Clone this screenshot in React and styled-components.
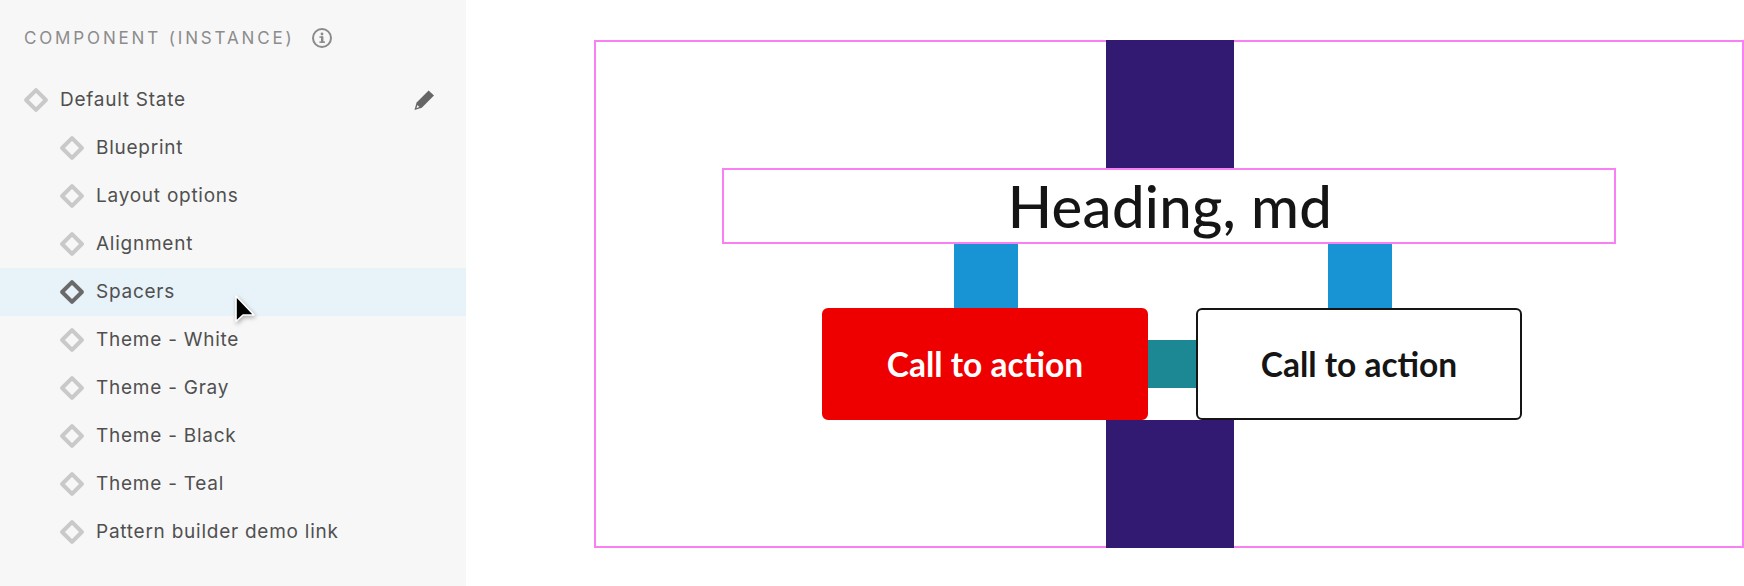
import React from 'react';
import styled, { createGlobalStyle } from 'styled-components';

const GlobalStyle = createGlobalStyle`
  html, body {
    margin: 0;
    padding: 0;
    background: #fff;
  }
  *, *::before, *::after {
    box-sizing: border-box;
  }
`;

const Page = styled.div`
  position: relative;
  display: flex;
  width: 1744px;
  height: 586px;
  overflow: hidden;
`;

const Sidebar = styled.aside`
  width: 466px;
  flex-shrink: 0;
  background: #f7f7f7;
  font-family: Inter, "Liberation Sans", sans-serif;
`;

const SidebarHeader = styled.div`
  display: flex;
  align-items: center;
  gap: 16px;
  height: 76px;
  padding: 0 0 0 24px;
`;

const SidebarTitle = styled.span`
  font-size: 17px;
  letter-spacing: 2.85px;
  color: #8c8c8c;
  white-space: nowrap;
`;

const Row = styled.div`
  display: flex;
  align-items: center;
  gap: 12px;
  height: 48px;
  padding: 0 32px 0 ${(p) => (p.$nested ? '60px' : '24px')};
  background: ${(p) => (p.$active ? '#e7f2f9' : 'transparent')};
  color: #505050;
  font-size: 19px;
  letter-spacing: 0.75px;
`;

const RowLabel = styled.span`
  flex: 1;
  padding-bottom: 2px;
  white-space: nowrap;
`;

const Diamond = styled.span`
  display: flex;
  align-items: center;
  justify-content: center;
  width: 24px;
  height: 24px;
  flex-shrink: 0;

  &::before {
    content: '';
    flex-shrink: 0;
    width: 18px;
    height: 18px;
    border: 4px solid ${(p) => (p.$active ? '#6a6a6a' : '#c9c9c9')};
    border-radius: 2px;
    transform: rotate(45deg);
  }
`;

const Canvas = styled.main`
  flex: 1;
  padding: 40px 0 0 128px;
  background: #fff;
`;

const OuterFrame = styled.section`
  display: flex;
  flex-direction: column;
  align-items: center;
  width: 1150px;
  height: 508px;
  box-shadow: inset 0 0 0 2px #f97ff5;
`;

const VerticalSpacer = styled.div`
  width: 128px;
  height: 128px;
  margin-left: 2px;
  flex-shrink: 0;
  background: #321a73;
`;

const HeadingFrame = styled.div`
  display: flex;
  align-items: center;
  justify-content: center;
  width: 894px;
  height: 76px;
  box-shadow: inset 0 0 0 2px #f97ff5;
`;

const Heading = styled.h2`
  margin: 0 0 0 2px;
  font-family: Lato, Inter, sans-serif;
  font-weight: 500;
  font-size: 58px;
  letter-spacing: 0.3px;
  line-height: 76px;
  color: #151515;
  white-space: nowrap;
`;

const Actions = styled.div`
  display: flex;
  margin-left: 6px;
`;

const ActionColumn = styled.div`
  display: flex;
  flex-direction: column;
  align-items: center;
  width: 326px;
`;

const ActionSpacer = styled.div`
  width: 64px;
  height: 64px;
  margin-left: 2px;
  background: #1893d3;
`;

const GapSpacer = styled.div`
  align-self: flex-end;
  width: 48px;
  height: 48px;
  margin-bottom: 32px;
  background: #1c8893;
`;

const Button = styled.button`
  width: 100%;
  height: 112px;
  padding: 0;
  border: 2px solid ${(p) => (p.$primary ? '#ee0000' : '#151515')};
  border-radius: 6px;
  background: ${(p) => (p.$primary ? '#ee0000' : '#fff')};
  color: ${(p) => (p.$primary ? '#fff' : '#151515')};
  font-family: Lato, Inter, sans-serif;
  font-weight: 700;
  font-size: 33.5px;
  white-space: nowrap;
`;

const Cursor = styled.svg`
  position: absolute;
  left: 228px;
  top: 288px;
  filter: drop-shadow(1px 2px 2px rgba(0, 0, 0, 0.3));
`;

const InfoIcon = () => (
  <svg width="22" height="22" viewBox="0 0 22 22" fill="none">
    <circle cx="11" cy="11" r="9" stroke="#8a8a8a" strokeWidth="2" />
    <rect x="10" y="9.5" width="2.4" height="6" fill="#8a8a8a" />
    <rect x="8.4" y="9.3" width="3.6" height="1.5" fill="#8a8a8a" />
    <rect x="8.4" y="14.4" width="5.6" height="1.5" fill="#8a8a8a" />
    <circle cx="11" cy="7" r="1.4" fill="#8a8a8a" />
  </svg>
);

const PencilIcon = () => (
  <svg width="20" height="20" viewBox="0 0 20 20">
    <path d="M0.5 20 L2.6 12.6 L14.6 0.4 L20 5.6 L7.8 17.8 Z" fill="#666" />
    <path d="M2.4 18.2 L3.4 15 L5.4 17 Z" fill="#f0f0f0" />
  </svg>
);

const items = [
  'Blueprint',
  'Layout options',
  'Alignment',
  'Spacers',
  'Theme - White',
  'Theme - Gray',
  'Theme - Black',
  'Theme - Teal',
  'Pattern builder demo link',
];

const App = () => (
  <Page>
    <GlobalStyle />
    <Sidebar>
      <SidebarHeader>
        <SidebarTitle>COMPONENT (INSTANCE)</SidebarTitle>
        <InfoIcon />
      </SidebarHeader>
      <Row>
        <Diamond />
        <RowLabel>Default State</RowLabel>
        <PencilIcon />
      </Row>
      {items.map((item) => (
        <Row key={item} $nested $active={item === 'Spacers'}>
          <Diamond $active={item === 'Spacers'} />
          <RowLabel>{item}</RowLabel>
        </Row>
      ))}
    </Sidebar>
    <Canvas>
      <OuterFrame>
        <VerticalSpacer />
        <HeadingFrame>
          <Heading>Heading, md</Heading>
        </HeadingFrame>
        <Actions>
          <ActionColumn>
            <ActionSpacer />
            <Button $primary>Call to action</Button>
          </ActionColumn>
          <GapSpacer />
          <ActionColumn>
            <ActionSpacer />
            <Button>Call to action</Button>
          </ActionColumn>
        </Actions>
        <VerticalSpacer />
      </OuterFrame>
    </Canvas>
    <Cursor width="32" height="40" viewBox="0 0 32 40">
      <path d="M8 8 L26 27 L15 27 L8 33.5 Z" fill="#000" stroke="#fff" strokeWidth="1.6" strokeLinejoin="round" />
    </Cursor>
  </Page>
);

export default App;
